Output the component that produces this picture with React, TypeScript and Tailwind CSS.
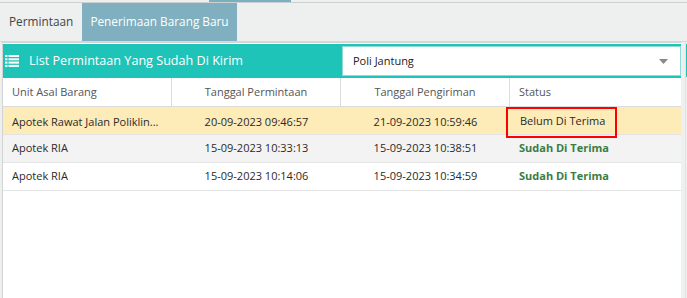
import React from "react";

const rows = [
  { unit: "Apotek Rawat Jalan Poliklin...", tp: "20-09-2023 09:46:57", tk: "21-09-2023 10:59:46", status: "Belum Di Terima", done: false },
  { unit: "Apotek RIA", tp: "15-09-2023 10:33:13", tk: "15-09-2023 10:38:51", status: "Sudah Di Terima", done: true },
  { unit: "Apotek RIA", tp: "15-09-2023 10:14:06", tk: "15-09-2023 10:34:59", status: "Sudah Di Terima", done: true },
];

function ListIcon() {
  return (
    <svg width="14" height="12" viewBox="0 0 14 12" fill="white">
      <rect x="0" y="0" width="2.5" height="2" />
      <rect x="3.5" y="0" width="10.5" height="2" />
      <rect x="0" y="3.3" width="2.5" height="2" />
      <rect x="3.5" y="3.3" width="10.5" height="2" />
      <rect x="0" y="6.6" width="2.5" height="2" />
      <rect x="3.5" y="6.6" width="10.5" height="2" />
      <rect x="0" y="9.9" width="2.5" height="2" />
      <rect x="3.5" y="9.9" width="10.5" height="2" />
    </svg>
  );
}

export default function App() {
  return (
    <div
      className="w-[687px] h-[298px] overflow-hidden bg-[#eef0ef] flex flex-col"
      style={{ fontFamily: '"Open Sans", "Noto Sans", sans-serif' }}
    >
      {/* top strip */}
      <div className="h-[3px] border-b border-[#cdd0d0] flex">
        <div className="ml-[209px] w-[82px] h-[2px] bg-[#7aafc0]" />
      </div>
      {/* tabs */}
      <div className="h-[39px] flex items-stretch text-[11.8px] border-b border-[#d5d8d8]">
        <div className="w-[82px] flex items-center pl-[9px] text-[#444]">Permintaan</div>
        <div className="w-[155px] flex items-center justify-center bg-[#80b0bf] text-white">
          Penerimaan Barang Baru
        </div>
      </div>
      {/* panel area */}
      <div className="flex-1 flex">
        <div className="ml-[2px] w-[679px] bg-white border-l border-t border-[#d3d5d5] pt-[1px] flex flex-col">
          <div className="h-[34px] bg-[#1fc4b8] flex items-center pl-[1px]">
            <div className="w-[338px] flex items-center gap-[10px] pl-[1px] text-white text-[12.6px]">
              <ListIcon />
              <span>List Permintaan Yang Sudah Di Kirim</span>
            </div>
            <div className="w-[339px] h-[30px] bg-white border border-[#8fdad3] flex items-center justify-between pl-[10px] pr-[12px] text-[11px] text-[#222]">
              <span>Poli Jantung</span>
              <svg width="9" height="5" viewBox="0 0 9 5">
                <path d="M0 0 L9 0 L4.5 5 Z" fill="#888" />
              </svg>
            </div>
          </div>
          {/* table */}
          <div className="text-[11px]">
            <div className="grid grid-cols-[169px_169px_169px_171px] h-[29px] border-b border-[#dcdcdc] text-[#555]">
              <div className="flex items-center pl-[9px] border-r border-[#dcdcdc]">Unit Asal Barang</div>
              <div className="flex items-center justify-center border-r border-[#dcdcdc]">Tanggal Permintaan</div>
              <div className="flex items-center justify-center border-r border-[#dcdcdc]">Tanggal Pengiriman</div>
              <div className="flex items-center pl-[9px]">Status</div>
            </div>
            {rows.map((r, i) => (
              <div
                key={i}
                className={`grid grid-cols-[169px_169px_169px_171px] h-[28px] border-b border-[#e4e4e4] text-[#2a2a2a] ${
                  i === 0 ? "bg-[#fdebb8] relative z-10" : i === 1 ? "bg-[#f3f3f3]" : "bg-white"
                }`}
              >
                <div className="flex items-center pl-[9px] whitespace-nowrap overflow-hidden">{r.unit}</div>
                <div className="flex items-center justify-center">{r.tp}</div>
                <div className="flex items-center justify-center">{r.tk}</div>
                <div className="flex items-center">
                  {r.done ? (
                    <span className="pl-[9px] font-bold text-[#3a7d44]">{r.status}</span>
                  ) : (
                    <span className="self-start ml-[-4px] h-[31px] w-[111px] border-2 border-[#f00] flex items-center pl-[12px] pb-[2px]">
                      {r.status}
                    </span>
                  )}
                </div>
              </div>
            ))}
          </div>
        </div>
        <div className="ml-[4px] flex-1 flex flex-col border-l border-[#e2e4e4] pt-[2px]">
          <div className="h-[33px] bg-[#1fc4b8]" />
        </div>
      </div>
    </div>
  );
}
